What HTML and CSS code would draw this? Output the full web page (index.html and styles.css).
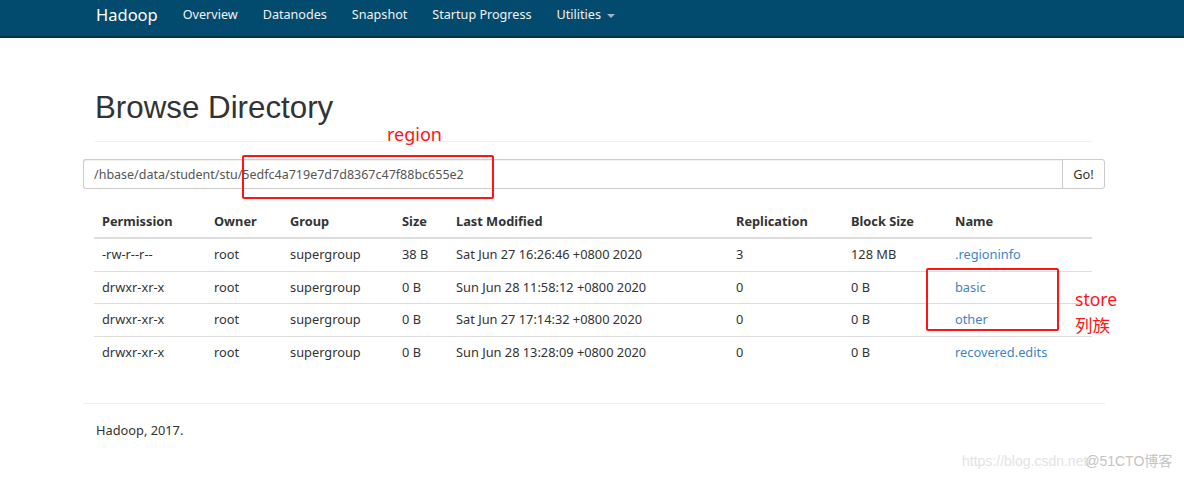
FILE: index.html
```html
<!DOCTYPE html>
<html>
<head>
<meta charset="utf-8">
<title>Browsing HDFS</title>
<link rel="stylesheet" href="styles.css">
</head>
<body>
<header class="navbar">
  <div class="nav-inner">
    <a class="brand">Hadoop</a>
    <nav class="nav-links">
      <a>Overview</a>
      <a>Datanodes</a>
      <a>Snapshot</a>
      <a>Startup Progress</a>
      <a class="dropdown">Utilities <span class="caret"></span></a>
    </nav>
  </div>
</header>

<main class="container">
  <div class="page-header">
    <h1>Browse Directory</h1>
  </div>

  <div class="input-group">
    <input class="path-input" type="text" value="/hbase/data/student/stu/5edfc4a719e7d7d8367c47f88bc655e2">
    <button class="go-btn">Go!</button>
  </div>

  <table class="listing">
    <colgroup>
      <col class="c-perm"><col class="c-owner"><col class="c-group"><col class="c-size"><col class="c-mod"><col class="c-rep"><col class="c-block"><col class="c-name">
    </colgroup>
    <thead>
      <tr><th>Permission</th><th>Owner</th><th>Group</th><th>Size</th><th>Last Modified</th><th>Replication</th><th>Block Size</th><th>Name</th></tr>
    </thead>
    <tbody>
      <tr><td>-rw-r--r--</td><td>root</td><td>supergroup</td><td>38 B</td><td>Sat Jun 27 16:26:46 +0800 2020</td><td>3</td><td>128 MB</td><td><a>.regioninfo</a></td></tr>
      <tr><td>drwxr-xr-x</td><td>root</td><td>supergroup</td><td>0 B</td><td>Sun Jun 28 11:58:12 +0800 2020</td><td>0</td><td>0 B</td><td><a>basic</a></td></tr>
      <tr><td>drwxr-xr-x</td><td>root</td><td>supergroup</td><td>0 B</td><td>Sat Jun 27 17:14:32 +0800 2020</td><td>0</td><td>0 B</td><td><a>other</a></td></tr>
      <tr><td>drwxr-xr-x</td><td>root</td><td>supergroup</td><td>0 B</td><td>Sun Jun 28 13:28:09 +0800 2020</td><td>0</td><td>0 B</td><td><a>recovered.edits</a></td></tr>
    </tbody>
  </table>

  <footer class="footer">
    <p>Hadoop, 2017.</p>
  </footer>
</main>

<div class="annot box-region"></div>
<div class="annot label-region">region</div>
<div class="annot box-store"></div>
<div class="annot label-store">store<br>列族</div>
<div class="watermark"><span class="wm-url">https://blog.csdn.net/</span><span class="wm-site">@51CTO博客</span></div>
</body>
</html>
```

FILE: styles.css
```css
* { box-sizing: border-box; }

html, body {
  margin: 0;
  padding: 0;
  background: #fff;
}

body {
  width: 1184px;
  height: 477px;
  overflow: hidden;
  position: relative;
  font-family: "Noto Sans", "Open Sans", "Noto Sans CJK SC", sans-serif;
  font-size: 12.8px;
  color: #333;
}

/* ---------- navbar ---------- */
.navbar {
  height: 38px;
  background: #034b6e;
  border-bottom: 2px solid #01324a;
}

.nav-inner {
  display: flex;
  align-items: center;
  height: 30px;
  padding-left: 96px;
}

.brand {
  font-size: 16.5px;
  color: #fff;
  margin-right: 25px;
  line-height: 30px;
}

.nav-links {
  display: flex;
  align-items: center;
  gap: 25px;
}

.nav-links a {
  color: #f2f2f2;
  font-size: 12.6px;
  line-height: 30px;
}

.caret {
  display: inline-block;
  width: 0;
  height: 0;
  margin-left: 3px;
  vertical-align: middle;
  border-top: 4px solid #9fb4c2;
  border-left: 4px solid transparent;
  border-right: 4px solid transparent;
}

/* ---------- container ---------- */
.container {
  margin-left: 83px;
  width: 1022px;
}

.page-header {
  margin: 0 13px 0 12px;
  padding-top: 53px;
  padding-bottom: 16px;
  border-bottom: 1px solid #eee;
}

.page-header h1 {
  margin: 0;
  font-family: "Liberation Sans", Arial, sans-serif;
  font-weight: 400;
  font-size: 31.3px;
  line-height: 34px;
  color: #333;
}

/* ---------- input group ---------- */
.input-group {
  display: flex;
  margin-top: 17px;
  height: 30px;
}

.path-input {
  flex: 1;
  height: 30px;
  border: 1px solid #ccc;
  border-right: none;
  border-radius: 3px 0 0 3px;
  padding: 0 10px;
  font-family: inherit;
  font-size: 12.5px;
  color: #555;
  box-shadow: inset 0 1px 1px rgba(0,0,0,.06);
}

.go-btn {
  width: 43px;
  height: 30px;
  border: 1px solid #ccc;
  border-radius: 0 3px 3px 0;
  background: #fff;
  font-family: inherit;
  font-size: 12.8px;
  color: #333;
  padding: 0;
}

/* ---------- table ---------- */
.listing {
  margin: 17px 13px 0 11px;
  width: 998px;
  border-collapse: collapse;
  table-layout: fixed;
}

.c-perm { width: 112px; }
.c-owner { width: 76px; }
.c-group { width: 112px; }
.c-size { width: 54px; }
.c-mod { width: 280px; }
.c-rep { width: 115px; }
.c-block { width: 104px; }
.c-name { width: 145px; }

.listing th,
.listing td {
  padding: 8px 8px;
  text-align: left;
  line-height: 16px;
  white-space: nowrap;
}

.listing th {
  font-weight: 700;
  border-bottom: 2px solid #ddd;
  color: #333;
  padding-top: 7px;
  padding-bottom: 8px;
}

.listing td {
  border-top: 1px solid #ddd;
  padding-top: 7px;
  padding-bottom: 8.5px;
}

.listing thead + tbody tr:first-child td {
  border-top: none;
}

.listing a {
  color: #3d85c6;
  text-decoration: none;
}

/* ---------- footer ---------- */
.footer {
  margin-top: 35px;
  border-top: 1px solid #eee;
  padding-left: 13px;
}

.footer p {
  margin: 17px 0 0;
  line-height: 18px;
}

/* ---------- annotations (overlay) ---------- */
.annot {
  position: absolute;
  color: #ff1414;
}

.box-region {
  left: 242px;
  top: 155px;
  width: 252px;
  height: 44px;
  border: 2px solid #ff1414;
  border-radius: 2px;
}

.label-region {
  left: 387px;
  top: 122px;
  font-size: 18px;
  line-height: 24px;
}

.box-store {
  left: 926px;
  top: 268px;
  width: 133px;
  height: 63px;
  border: 2px solid #ff1414;
  border-radius: 2px;
}

.label-store {
  left: 1075px;
  top: 286px;
  font-size: 17.5px;
  line-height: 26px;
}

.watermark {
  position: absolute;
  left: 962px;
  top: 452px;
  font-family: "Liberation Sans", Arial, "Noto Sans CJK SC", sans-serif;
  font-size: 14px;
  line-height: 18px;
  white-space: nowrap;
}

.wm-url { color: #e3e3e3; }
.wm-site { color: #c4c4c4; margin-left: -6px; }
```
